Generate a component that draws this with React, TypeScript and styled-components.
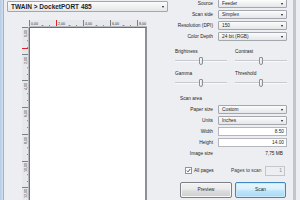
import React from 'react'
import styled, { createGlobalStyle } from 'styled-components'

const GlobalStyle = createGlobalStyle`
  html, body {
    margin: 0;
    padding: 0;
  }
  body {
    width: 300px;
    height: 200px;
    overflow: hidden;
    background: #eceef1;
    font-family: "Liberation Sans", Arial, sans-serif;
  }
`

const Window = styled.div`
  display: flex;
  width: 300px;
  height: 200px;
  overflow: hidden;
  background: #eceef1;
  color: #1f1f1f;
`

const FrameEdge = styled.div`
  flex: none;
  width: 3px;
  background: linear-gradient(to right, #b4cbe4, #d3e0ef);
  border-right: 1px solid #a9b3bf;
`

const PreviewPane = styled.div`
  flex: none;
  width: 166px;
  display: flex;
  flex-direction: column;
`

const DropBox = styled.div<{ $strong?: boolean }>`
  box-sizing: border-box;
  display: flex;
  align-items: center;
  height: 100%;
  padding: 0 3px 0 3px;
  border: 1px solid #a3a8ae;
  border-radius: 1px;
  background: linear-gradient(#fcfcfc, #e5e6e8);
  font-size: ${p => (p.$strong ? '6.5px' : '4.8px')};
  font-weight: ${p => (p.$strong ? 700 : 400)};
  white-space: nowrap;
  overflow: hidden;
`

const Caret = styled.span`
  margin-left: auto;
  width: 0;
  height: 0;
  border-left: 1.5px solid transparent;
  border-right: 1.5px solid transparent;
  border-top: 2px solid #1a1a1a;
`

const DeviceBar = styled.div`
  height: 11px;
  width: 161px;
  margin: 1px 0 0 3px;
`

const PreviewArea = styled.div`
  flex: 1;
  min-height: 0;
  display: grid;
  grid-template-columns: 7px 118px;
  grid-template-rows: 7px 1fr;
  margin: 8px 0 0 18px;
`

const RulerCell = styled.div<{ $col: number; $row: number }>`
  grid-column: ${p => p.$col};
  grid-row: ${p => p.$row};
  overflow: hidden;
  background: #e6e8eb;
  svg {
    display: block;
  }
`

const Page = styled.div`
  grid-column: 2;
  grid-row: 2;
  box-sizing: border-box;
  background: #ffffff;
  border-left: 1px solid #6d6f73;
  border-top: 1px solid #6d6f73;
  border-right: 2px solid #8d9095;
`

const SidePanel = styled.div`
  flex: none;
  width: 117px;
  padding-right: 6px;
  border-right: 3px solid #c2c6cc;
  display: flex;
  flex-direction: column;
`

const FieldStack = styled.div<{ $top: number }>`
  display: flex;
  flex-direction: column;
  gap: 2px;
  margin-top: ${p => p.$top}px;
`

const FieldRow = styled.div`
  display: grid;
  grid-template-columns: 43px 69px;
  column-gap: 5px;
  align-items: center;
  height: 9px;
`

const FieldLabel = styled.span`
  text-align: right;
  font-size: 4.8px;
  line-height: 9px;
  white-space: nowrap;
`

const TextBox = styled.div`
  box-sizing: border-box;
  height: 9px;
  padding-right: 2px;
  border: 1px solid #b3b7bd;
  background: #ffffff;
  font-size: 4.8px;
  line-height: 7px;
  text-align: right;
`

const ReadOut = styled.span`
  padding-right: 4px;
  font-size: 4.8px;
  line-height: 9px;
  text-align: right;
`

const SliderGrid = styled.div`
  display: grid;
  grid-template-columns: 52px 52px;
  column-gap: 8px;
  row-gap: 5px;
  margin: 8px 0 0 5px;
`

const SliderBlock = styled.div`
  display: flex;
  flex-direction: column;
`

const SmallLabel = styled.span<{ $indent?: number }>`
  padding-left: ${p => p.$indent ?? 0}px;
  font-size: 4.8px;
  line-height: 5px;
  white-space: nowrap;
`

const Track = styled.div`
  position: relative;
  height: 10px;
  margin-top: 2px;
  &::before {
    content: '';
    position: absolute;
    left: 0;
    right: 0;
    top: 4px;
    height: 1px;
    background: #c6cacf;
    border-bottom: 1px solid #f8f9fa;
  }
`

const Thumb = styled.div`
  position: absolute;
  top: 1px;
  box-sizing: border-box;
  width: 4px;
  height: 8px;
  margin-left: -2px;
  border: 1px solid #8b9097;
  border-radius: 1px 1px 2px 2px;
  background: linear-gradient(to right, #fdfdfd, #dcdee1);
`

const SectionTitle = styled(SmallLabel)`
  margin-top: 8px;
`

const CheckRow = styled.div`
  display: flex;
  align-items: center;
  height: 9px;
  margin-top: 8px;
  padding-left: 15px;
  font-size: 4.8px;
`

const CheckBox = styled.span`
  box-sizing: border-box;
  flex: none;
  width: 7px;
  height: 7px;
  border: 1px solid #8f949a;
  background: #fbfbfb;
  display: flex;
  align-items: center;
  justify-content: center;
  svg {
    display: block;
  }
`

const CheckText = styled.span`
  width: 37px;
  margin-left: 2px;
`

const MutedText = styled.span`
  flex: 1;
  color: #3a3a3a;
`

const PagesBox = styled.div`
  box-sizing: border-box;
  width: 20px;
  height: 10px;
  margin-right: 2px;
  padding-right: 2px;
  border: 1px solid #c3c7cc;
  color: #8a8d91;
  line-height: 8px;
  text-align: right;
`

const ButtonRow = styled.div`
  display: flex;
  gap: 3px;
  margin-top: 7px;
  padding-left: 10px;
`

const PushButton = styled.div<{ $primary?: boolean }>`
  box-sizing: border-box;
  width: ${p => (p.$primary ? 51 : 52)}px;
  height: 16px;
  border: 1px solid ${p => (p.$primary ? '#3d87c4' : '#7d8087')};
  border-radius: 2px;
  background: ${p =>
    p.$primary
      ? 'linear-gradient(#eaf6fd 0%, #d9f0fc 45%, #bee6fd 55%, #a7d9f5 100%)'
      : 'linear-gradient(#f2f2f2 0%, #ebebeb 45%, #dddddd 55%, #cfcfcf 100%)'};
  box-shadow: inset 0 0 0 1px ${p => (p.$primary ? '#cdeafb' : '#f6f6f6')};
  font-size: 4.8px;
  line-height: 14px;
  text-align: center;
`

const STEP = 27
const V_STEP = 26.7

const HorizontalRuler: React.FC = () => {
  const majors = [0, 1, 2, 3, 4]
  return (
    <svg width={118} height={7}>
      {majors.map(i => (
        <g key={i}>
          <line x1={i * STEP + 0.5} y1={0} x2={i * STEP + 0.5} y2={7} stroke="#7b7f86" strokeWidth={1} />
          <text x={i * STEP + 2} y={4.6} fontSize={3.6} fill="#333" fontFamily="Liberation Sans, Arial, sans-serif">
            {`${i * 2},00`}
          </text>
          {[1, 2, 3].map(m => (
            <rect key={m} x={i * STEP + m * 6.75 + (m === 1 ? 6 : 0)} y={5} width={0.8} height={1} fill="#6b6f75" />
          ))}
        </g>
      ))}
      <line x1={27.5} y1={0} x2={27.5} y2={7} stroke="#e0202a" strokeWidth={1} />
      <line x1={0} y1={6.5} x2={118} y2={6.5} stroke="#b8bcc2" strokeWidth={1} />
    </svg>
  )
}

const VerticalRuler: React.FC = () => {
  const majors = [0, 1, 2, 3, 4, 5, 6]
  return (
    <svg width={7} height={180}>
      {majors.map(i => {
        const y = Math.round(i * V_STEP)
        return (
          <g key={i}>
            <line x1={0} y1={y + 0.5} x2={7} y2={y + 0.5} stroke="#7b7f86" strokeWidth={1} />
            <text
              x={0}
              y={0}
              fontSize={3.6}
              fill="#333"
              fontFamily="Liberation Sans, Arial, sans-serif"
              transform={`translate(4.6 ${y + (i >= 5 ? 11 : 10)}) rotate(-90)`}
            >
              {`${i * 2},00`}
            </text>
            {[2, 3].map(m => (
              <rect key={m} x={5} y={y + m * 6.7} width={1} height={0.8} fill="#6b6f75" />
            ))}
          </g>
        )
      })}
      <line x1={0} y1={21.5} x2={7} y2={21.5} stroke="#e0202a" strokeWidth={1} />
      <line x1={6.5} y1={0} x2={6.5} y2={180} stroke="#b8bcc2" strokeWidth={1} />
    </svg>
  )
}

const Dropdown: React.FC<{ value: string; strong?: boolean }> = ({ value, strong }) => (
  <DropBox $strong={strong}>
    <span>{value}</span>
    <Caret />
  </DropBox>
)

const Slider: React.FC<{ label: string; value: number }> = ({ label, value }) => (
  <SliderBlock>
    <SmallLabel>{label}</SmallLabel>
    <Track>
      <Thumb style={{ left: `${value}%` }} />
    </Track>
  </SliderBlock>
)

const deviceFields = [
  { label: 'Source', value: 'Feeder' },
  { label: 'Scan side', value: 'Simplex' },
  { label: 'Resolution (DPI)', value: '150' },
  { label: 'Color Depth', value: '24 bit (RGB)' },
]

const adjustments = [
  { label: 'Brightness', value: 50 },
  { label: 'Contrast', value: 50 },
  { label: 'Gamma', value: 50 },
  { label: 'Threshold', value: 50 },
]

const App: React.FC = () => {
  return (
    <>
      <GlobalStyle />
      <Window>
        <FrameEdge />
        <PreviewPane>
          <DeviceBar>
            <Dropdown value="TWAIN > DocketPORT 485" strong />
          </DeviceBar>
          <PreviewArea>
            <RulerCell $col={2} $row={1}>
              <HorizontalRuler />
            </RulerCell>
            <RulerCell $col={1} $row={2}>
              <VerticalRuler />
            </RulerCell>
            <Page />
          </PreviewArea>
        </PreviewPane>

        <SidePanel>
          <FieldStack $top={-1}>
            {deviceFields.map(f => (
              <FieldRow key={f.label}>
                <FieldLabel>{f.label}</FieldLabel>
                <Dropdown value={f.value} />
              </FieldRow>
            ))}
          </FieldStack>

          <SliderGrid>
            {adjustments.map(a => (
              <Slider key={a.label} label={a.label} value={a.value} />
            ))}
          </SliderGrid>

          <SectionTitle $indent={10}>Scan area</SectionTitle>
          <FieldStack $top={4}>
            <FieldRow>
              <FieldLabel>Paper size</FieldLabel>
              <Dropdown value="Custom" />
            </FieldRow>
            <FieldRow>
              <FieldLabel>Units</FieldLabel>
              <Dropdown value="Inches" />
            </FieldRow>
            <FieldRow>
              <FieldLabel>Width</FieldLabel>
              <TextBox>8.50</TextBox>
            </FieldRow>
            <FieldRow>
              <FieldLabel>Height</FieldLabel>
              <TextBox>14.00</TextBox>
            </FieldRow>
            <FieldRow>
              <FieldLabel>Image size</FieldLabel>
              <ReadOut>7,75 MB</ReadOut>
            </FieldRow>
          </FieldStack>

          <CheckRow>
            <CheckBox>
              <svg width={5} height={5} viewBox="0 0 5 5">
                <path d="M0.8 2.6 L2 3.8 L4.3 1" fill="none" stroke="#2a3f6a" strokeWidth={0.9} />
              </svg>
            </CheckBox>
            <CheckText>All pages</CheckText>
            <MutedText>Pages to scan</MutedText>
            <PagesBox>1</PagesBox>
          </CheckRow>

          <ButtonRow>
            <PushButton>Preview</PushButton>
            <PushButton $primary>Scan</PushButton>
          </ButtonRow>
        </SidePanel>
      </Window>
    </>
  )
}

export default App
